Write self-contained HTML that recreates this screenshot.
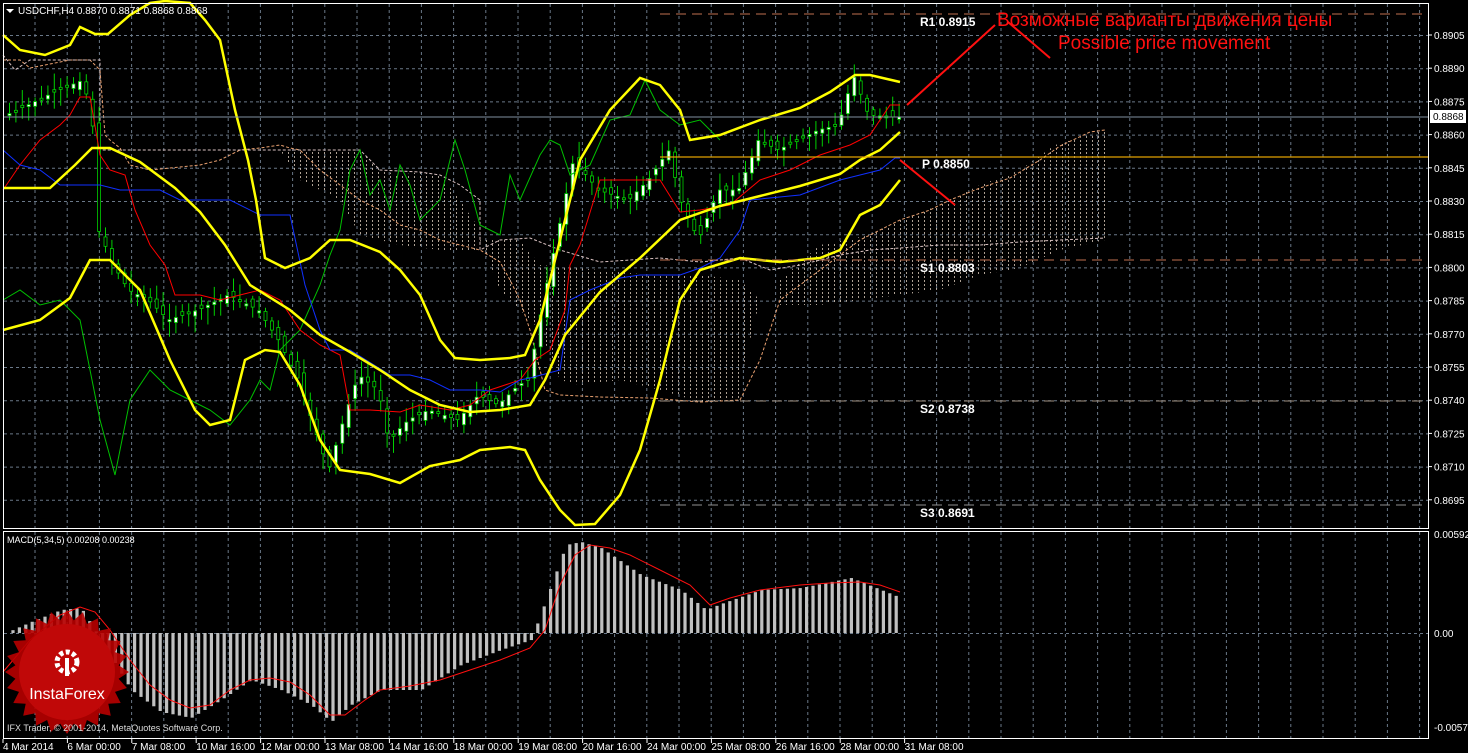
<!DOCTYPE html>
<html><head><meta charset="utf-8"><style>
html,body{margin:0;padding:0;background:#000;width:1468px;height:753px;overflow:hidden}
svg{display:block}
text{font-family:"Liberation Sans",sans-serif}
</style></head><body>
<svg id="s" width="1468" height="753" viewBox="0 0 1468 753" xmlns="http://www.w3.org/2000/svg">
<defs>
<pattern id="hatch" width="6" height="4" patternUnits="userSpaceOnUse"><rect x="0" y="0" width="1" height="2" fill="#d8c8b8"/></pattern>
</defs>
<rect width="1468" height="753" fill="#000"/>
<g id="grid"></g>
<g opacity="0.8">
<polygon fill="url(#hatch)" points="100,150 360,150 380,170 400,175 420,172 440,175 460,200 480,230 480,250 440,250 400,245 360,235 340,200 300,180 280,150 200,150"/>
<polygon fill="url(#hatch)" points="480,240 520,240 540,265 600,270 650,275 700,275 740,280 760,300 745,360 740,400 700,402 660,390 620,380 580,385 560,380 540,330 500,290"/>
<polygon fill="url(#hatch)" points="780,280 820,245 870,235 900,220 940,205 980,185 1020,170 1055,145 1105,130 1105,240 1060,250 1020,268 980,275 940,290 900,295 860,300 820,305 780,305"/>
</g>
<polyline fill="none" stroke="#e8a070" stroke-dasharray="3,2" points="3,60 20,60 30,68 45,65 70,60 90,60 100,70 105,135 110,140 120,148 130,165 150,170 170,168 200,165 220,160 240,150 260,148 280,145 290,148 300,150 320,170 340,185 360,200 380,210 400,225 420,230 440,240 460,245 480,250 500,262 510,280 520,300 530,330 540,370 545,390 560,395 600,397 650,398 700,402 740,400 760,360 770,330 780,300 800,285 820,270 840,255 860,240 880,230 900,220 930,210 950,200 980,188 1010,178 1040,160 1060,146 1090,132 1105,130"/>
<polyline fill="none" stroke="#d8c0c0" stroke-dasharray="3,2" points="3,55 15,70 30,60 100,60 100,150 360,150 380,170 420,172 440,175 460,185 480,200 480,250 500,240 530,238 560,250 600,262 660,258 700,262 740,258 770,270 800,265 840,255 870,250 900,248 940,245 980,245 1020,242 1060,240 1105,238"/>
<g id="candles"></g>
<polyline fill="none" stroke="#00c000" stroke-width="1" points="3,300 20,290 40,305 60,300 80,320 100,420 115,475 130,400 150,370 170,390 190,400 210,410 230,425 250,400 260,380 270,390 280,350 300,330 320,285 330,255 340,230 350,170 360,150 370,195 380,180 390,210 400,165 410,185 420,220 440,200 455,140 465,170 480,225 500,235 510,175 520,200 540,155 550,140 560,145 570,175 590,165 610,120 630,115 645,80 660,110 680,125 700,120 720,140"/>
<polyline fill="none" stroke="#ff0000" stroke-width="1" points="3,190 20,165 40,140 60,125 70,115 80,97 90,97 100,155 110,170 125,175 135,210 150,245 165,265 175,295 200,295 220,300 240,295 260,290 280,300 300,330 320,345 340,355 350,410 370,410 400,412 420,405 450,410 470,405 490,390 520,380 535,360 550,350 565,310 570,265 580,245 600,180 630,180 660,180 680,212 700,210 730,205 760,180 790,170 820,155 850,145 870,135 890,105 900,105"/>
<polyline fill="none" stroke="#1030ff" stroke-width="1" points="3,150 20,165 40,170 60,185 100,185 120,190 160,190 180,200 230,200 260,215 290,215 305,285 320,330 330,350 350,350 390,375 410,375 430,380 450,390 480,390 500,392 520,380 530,378 560,370 570,300 590,290 620,278 640,275 680,275 700,268 720,258 740,230 750,200 800,195 840,180 860,175 880,170 895,158 900,158"/>
<polyline fill="none" stroke="#ffff00" stroke-width="2.5" points="3,35 20,50 45,55 70,45 80,27 95,34 108,34 130,15 150,3 165,1 190,3 205,20 220,40 235,110 248,160 256,200 265,258 285,268 310,258 330,240 350,240 380,252 400,270 420,295 440,340 455,358 480,360 510,358 525,355 540,320 560,240 580,160 610,110 640,78 660,85 680,110 690,140 720,135 760,120 800,108 830,92 855,75 870,75 900,82"/>
<polyline fill="none" stroke="#ffff00" stroke-width="2.5" points="3,188 50,188 75,165 92,148 110,148 140,162 175,188 200,212 225,245 250,285 290,310 320,335 350,352 380,370 410,390 440,405 470,412 500,410 530,405 545,380 565,335 600,292 640,258 680,220 720,206 760,196 800,186 840,174 860,160 880,150 900,132"/>
<polyline fill="none" stroke="#ffff00" stroke-width="2.5" points="3,330 40,320 70,298 90,260 110,260 140,290 170,360 195,410 210,425 230,420 245,360 265,350 280,352 300,385 320,440 340,470 370,474 400,483 430,466 460,460 480,450 510,447 525,450 540,480 560,510 575,525 595,524 620,495 640,450 660,380 680,300 700,270 740,258 780,262 820,258 840,250 860,215 880,205 900,180"/>
<line x1="660" y1="14" x2="1428" y2="14" stroke="#c07050" stroke-dasharray="10,6"/>
<line x1="660" y1="157" x2="1428" y2="157" stroke="#e0a000" stroke-width="1.2"/>
<line x1="660" y1="260" x2="1428" y2="260" stroke="#c07050" stroke-dasharray="10,6"/>
<line x1="660" y1="401" x2="1428" y2="401" stroke="#a09080" stroke-dasharray="10,6"/>
<line x1="660" y1="505" x2="1428" y2="505" stroke="#909090" stroke-dasharray="10,6"/>
<line x1="3" y1="117" x2="1428" y2="117" stroke="#8090a0"/>
<g font-family="Liberation Mono,monospace" font-size="12" font-weight="bold" fill="#fff">
<text x="920" y="26">R1 0.8915</text><text x="922" y="168">P 0.8850</text>
<text x="920" y="272">S1 0.8803</text><text x="920" y="413">S2 0.8738</text><text x="920" y="517">S3 0.8691</text></g>
<g stroke="#ff1010" stroke-width="2"><line x1="907" y1="105" x2="995" y2="25"/><line x1="1008" y1="22" x2="1050" y2="58"/><line x1="900" y1="160" x2="955" y2="205"/></g>
<text x="997" y="26" font-size="19" fill="#ff1010">Возможные варианты движения цены</text>
<text x="1058" y="49" font-size="19" fill="#ff1010">Possible price movement</text>
<g id="macd"></g>
<polyline fill="none" stroke="#ff1010" stroke-width="1" points="3,672 30,640 60,615 80,607 95,612 110,630 130,660 150,685 170,700 190,708 210,705 230,690 250,680 270,678 290,682 310,695 330,715 345,715 365,700 380,690 410,686 440,680 470,670 500,660 530,648 545,630 560,585 575,555 590,545 610,548 630,555 660,570 690,585 710,605 730,598 760,590 800,585 830,583 860,582 880,585 900,592"/>
<rect x="3.5" y="3.5" width="1425" height="525" fill="none" stroke="#fff"/>
<rect x="3.5" y="531.5" width="1425" height="207" fill="none" stroke="#fff"/>
<polygon points="6,9 14,9 10,13" fill="#fff"/>
<text x="18" y="14" font-size="10" fill="#fff">USDCHF,H4  0.8870 0.8871 0.8868 0.8868</text>
<text x="7" y="543" font-size="9" fill="#fff">MACD(5,34,5) 0.00208 0.00238</text>
<g transform="translate(67,672)">
<polygon id="star" fill="#b80000" opacity="0.9" points=""/>
<circle r="48" fill="#c00808"/>
<circle cx="0" cy="-10" r="10" fill="none" stroke="#fff" stroke-width="5" stroke-dasharray="4,2.5"/>
<rect x="-2" y="-14" width="4" height="18" fill="#fff"/>
<text x="0" y="27" font-size="16" fill="#fff" text-anchor="middle">InstaForex</text>
</g>
<text x="7" y="731" font-size="9" fill="#ddd">IFX Trader, © 2001-2014, MetaQuotes Software Corp.</text>
<rect x="1430" y="110" width="36" height="13" fill="#fff"/>
<text x="1433" y="120" font-size="10" fill="#000">0.8868</text>
<g id="axis" font-size="10" fill="#fff"></g>
</svg>
<script>
(function(){
var NS="http://www.w3.org/2000/svg";
function el(p,t,a){var e=document.createElementNS(NS,t);for(var k in a)e.setAttribute(k,a[k]);document.getElementById(p).appendChild(e);return e;}
for(var x=35;x<1428;x+=32.2){el("grid","line",{x1:x,y1:4,x2:x,y2:528,stroke:"#6a7888","stroke-dasharray":"3,3"});el("grid","line",{x1:x,y1:532,x2:x,y2:738,stroke:"#6a7888","stroke-dasharray":"3,3"});}
for(var y=35.5;y<528;y+=33.2)el("grid","line",{x1:4,y1:y,x2:1428,y2:y,stroke:"#6a7888","stroke-dasharray":"3,3"});
el("grid","line",{x1:4,y1:633.5,x2:1428,y2:633.5,stroke:"#6a7888","stroke-dasharray":"3,3"});
for(var i=0;i<15;i++){var yy=35+i*33.2;var v=(0.8905-i*0.0015).toFixed(4);el("axis","line",{x1:1428,y1:yy,x2:1432,y2:yy,stroke:"#fff"});var t=el("axis","text",{x:1434,y:yy+4});t.textContent=v;}
[[538,"0.00592"],[637,"0.00"],[731,"-0.00578"]].forEach(function(a){var t=el("axis","text",{x:1434,y:a[0]});t.textContent=a[1];});
var lab=["4 Mar 2014","6 Mar 00:00","7 Mar 08:00","10 Mar 16:00","12 Mar 00:00","13 Mar 08:00","14 Mar 16:00","18 Mar 00:00","19 Mar 08:00","20 Mar 16:00","24 Mar 00:00","25 Mar 08:00","26 Mar 16:00","28 Mar 00:00","31 Mar 08:00"];
for(var i=0;i<lab.length;i++){var xx=3+i*64.4;el("axis","line",{x1:xx,y1:739,x2:xx,y2:743,stroke:"#fff"});var t=el("axis","text",{x:xx,y:750});t.textContent=lab[i];}
var anc=[[8,115],[40,100],[60,90],[85,80],[95,130],[100,230],[115,265],[130,290],[150,300],[170,320],[200,310],[230,295],[260,310],[280,340],[300,380],[320,440],[330,470],[345,420],[360,375],[380,390],[390,440],[410,420],[430,410],[460,420],[480,395],[500,405],[520,385],[530,380],[545,300],[560,230],[575,160],[600,190],[630,200],[650,180],[670,150],[682,200],[700,240],[720,190],[740,190],[760,140],[780,150],[800,140],[820,130],[840,125],[855,75],[870,115],[895,117]];
function yAt(x){if(x<anc[0][0])return anc[0][1];for(var i=0;i<anc.length-1;i++)if(x<=anc[i+1][0]){var a=anc[i],b=anc[i+1];return a[1]+(b[1]-a[1])*(x-a[0])/(b[0]-a[0]);}return 117;}
var seed=7;function rnd(){seed=(seed*9301+49297)%233280;return seed/233280;}
for(var x=8;x<=898;x+=6.4){var c=yAt(x+3),o=yAt(x-3)+(rnd()-0.5)*12;var tp=Math.min(o,c),h=Math.max(2,Math.abs(o-c));var w1=tp-3-rnd()*14,w2=tp+h+3+rnd()*14;
el("candles","line",{x1:x+1.5,y1:w1,x2:x+1.5,y2:w2,stroke:"#00d000"});
el("candles","rect",{x:x,y:tp,width:3,height:h,fill:(o>c?"#fff":"#000"),stroke:"#00d000","stroke-width":0.8});}
var m=[[5,633],[30,622],[60,610],[80,608],[100,640],[130,690],[160,712],[190,718],[220,700],[250,680],[280,690],[310,705],[330,722],[350,705],[380,690],[420,690],[460,665],[500,650],[530,640],[545,600],[565,545],[580,542],[600,548],[640,575],[680,590],[705,610],[720,604],[760,590],[800,588],[850,578],[880,590],[900,598]];
function mAt(x){for(var i=0;i<m.length-1;i++)if(x<=m[i+1][0]){var a=m[i],b=m[i+1];return a[1]+(b[1]-a[1])*(x-a[0])/(b[0]-a[0]);}return 598;}
for(var x=5;x<=900;x+=6.4){var v=mAt(x);el("macd","rect",{x:x,y:Math.min(v,633),width:3.2,height:Math.abs(v-633),fill:"#c0c0c0"});}
var pts=[];for(var i=0;i<48;i++){var r=i%2?52:62,a=i*Math.PI/24;pts.push((r*Math.cos(a)).toFixed(1)+","+(r*Math.sin(a)).toFixed(1));}
document.getElementById("star").setAttribute("points",pts.join(" "));
})();
</script>
</body></html>
